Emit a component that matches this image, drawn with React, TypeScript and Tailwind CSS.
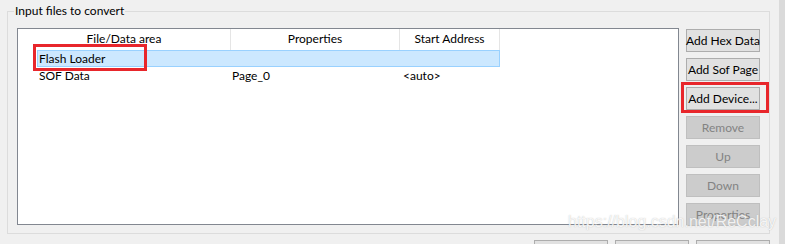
const font = "font-['Lato','Noto_Sans',sans-serif]";

const sideButtons = [
  { label: "Add Hex Data", enabled: true },
  { label: "Add Sof Page", enabled: true },
  { label: "Add Device...", enabled: true },
  { label: "Remove", enabled: false },
  { label: "Up", enabled: false },
  { label: "Down", enabled: false },
  { label: "Properties", enabled: false },
];

const rows = [
  { name: "Flash Loader", props: "", addr: "", selected: true },
  { name: "SOF Data", props: "Page_0", addr: "<auto>", selected: false },
];

function WinButton({ label, enabled }: { label: string; enabled: boolean }) {
  return (
    <div
      className={`flex h-[23px] w-[74px] shrink-0 items-center justify-center whitespace-nowrap border text-[12px] leading-none ${
        enabled
          ? "border-[#adadad] bg-[#e1e1e1] text-black"
          : "border-[#bfbfbf] bg-[#cccccc] text-[#838383]"
      }`}
    >
      {label}
    </div>
  );
}

export default function App() {
  return (
    <div className={`relative flex h-[244px] w-[785px] overflow-hidden bg-[#f0f0f0] ${font}`}>
      <div className="flex w-[779px] flex-col">
        {/* group box */}
        <div className="relative ml-[7px] mt-[11px] flex h-[223px] w-[763px] border border-[#dcdcdc] pb-[8px] pl-[9px] pt-[16px]">
          <span className="absolute left-[6px] top-[-9px] bg-[#f0f0f0] px-[1px] text-[12px] leading-[16px] text-black">
            Input files to convert
          </span>

          {/* list view */}
          <div className="flex h-[197px] w-[662px] flex-col border border-[#828790] bg-white text-[12px] text-black">
            <div className="flex h-[21px] shrink-0 leading-[20px]">
              <div className="w-[213px] border-r border-[#e5e5e5] text-center">File/Data area</div>
              <div className="w-[169px] border-r border-[#e5e5e5] text-center">Properties</div>
              <div className="w-[100px] border-r border-[#e5e5e5] text-center">Start Address</div>
            </div>
            {rows.map((r) => (
              <div key={r.name} className="flex h-[17px] leading-[15px]">
                <div className="w-[19px] shrink-0" />
                <div
                  className={`flex w-[463px] border ${
                    r.selected ? "border-[#99d1ff] bg-[#cce8ff]" : "border-transparent"
                  }`}
                >
                  <div className="w-[193px] pl-[1px]">{r.name}</div>
                  <div className="w-[170px] pl-[1px]">{r.props}</div>
                  <div className="pl-[2px]">{r.addr}</div>
                </div>
              </div>
            ))}
          </div>

          {/* side buttons */}
          <div className="ml-[7px] mt-[1px] flex flex-col gap-[6px]">
            {sideButtons.map((b) => (
              <WinButton key={b.label} label={b.label} enabled={b.enabled} />
            ))}
          </div>
        </div>

        {/* bottom buttons */}
        <div className="ml-[534px] mt-[6px] flex gap-[7px]">
          <WinButton label="" enabled />
          <WinButton label="" enabled />
          <WinButton label="" enabled />
        </div>
      </div>
      <div className="w-[6px] bg-[#dadada]" />

      {/* highlight boxes */}
      <div className="absolute left-[33px] top-[44px] h-[27px] w-[114px] border-[3px] border-[#e8262b]" />
      <div className="absolute left-[681px] top-[82px] h-[31px] w-[88px] border-[3px] border-[#e8262b]" />

      {/* watermark */}
      <div className="absolute left-[568px] top-[212px] whitespace-nowrap font-['Liberation_Sans',Arial,sans-serif] text-[16px] leading-[20px] text-white/85 [text-shadow:0_0_1px_rgba(120,120,120,0.5)]">
        https://blog.csdn.net/ReCclay
      </div>
    </div>
  );
}
